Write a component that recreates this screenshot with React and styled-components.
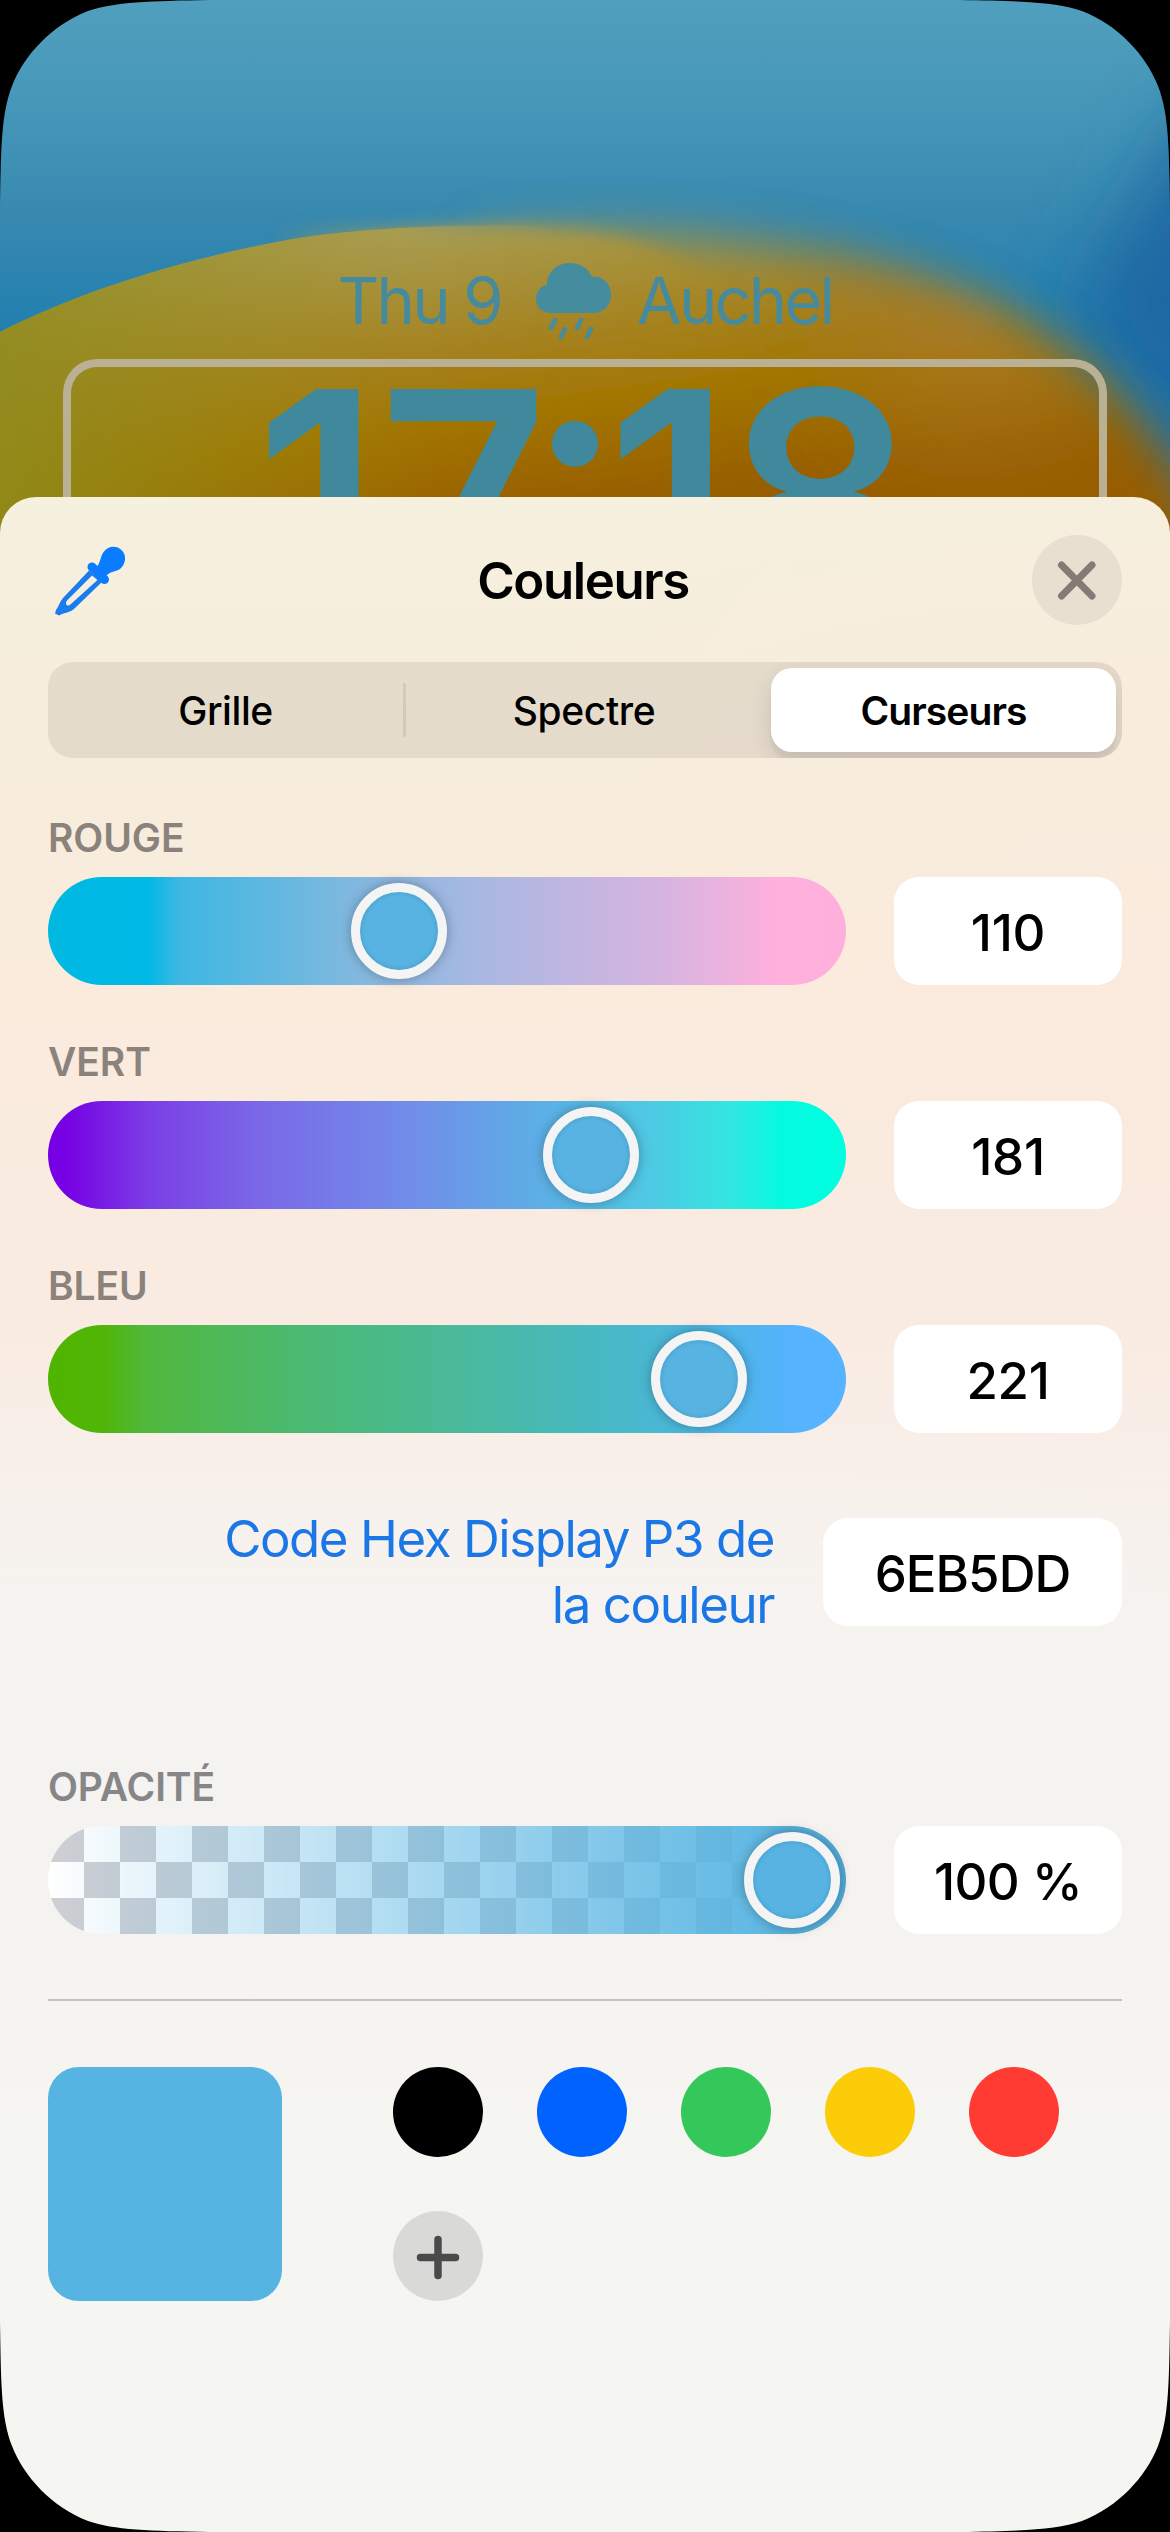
import React from 'react';
import styled, { createGlobalStyle } from 'styled-components';

const GlobalStyle = createGlobalStyle`
  *, *::before, *::after {
    box-sizing: border-box;
  }

  body {
    margin: 0;
    background: #000;
    font-family: Inter, Roboto, 'Liberation Sans', sans-serif;
  }
`

const Screen = styled.div`
  position: relative;
  display: flex;
  flex-direction: column;
  width: 1170px;
  height: 2532px;
  overflow: hidden;
  background: #000;
  clip-path: path('M0 210 C1 150 1 114 12 86 C24 55 52 25 88 11 C114 2 150 1 210 0 L960 0 C1020 1 1056 2 1082 11 C1118 25 1146 55 1158 86 C1169 114 1169 150 1170 210 L1170 2322 C1169 2382 1169 2418 1158 2446 C1146 2477 1118 2507 1082 2521 C1056 2530 1020 2531 960 2532 L210 2532 C150 2531 114 2530 88 2521 C52 2507 24 2477 12 2446 C1 2418 1 2382 0 2322 Z');
`

const Wallpaper = styled.svg`
  position: absolute;
  top: 0;
  left: 0;
`

const LockScreen = styled.div`
  position: relative;
  display: flex;
  flex-direction: column;
  align-items: center;
  height: 497px;
  padding-top: 259px;
  color: #468b9d;
`

const DateLine = styled.div`
  display: flex;
  align-items: center;
  height: 84px;
  font-size: 65px;
  line-height: 84px;
  letter-spacing: -2.8px;

  svg {
    margin: 0 25px 0 35px;
  }
`

const ClockFrame = styled.div`
  display: flex;
  justify-content: center;
  width: 1044px;
  height: 138px;
  margin-top: 16px;
  overflow: hidden;
  border: 8px solid #bab093;
  border-bottom: 0;
  border-radius: 34px 34px 0 0;
`

const Clock = styled.div`
  display: flex;
  height: 290px;
  margin-top: -16px;
  font-size: 294px;
  font-weight: 600;
  line-height: 290px;
  color: #40889b;
`

const Digit = styled.span`
  margin-left: ${(props) => props.$shift || 0}px;
  line-height: ${(props) => 290 - (props.$raise || 0) * 2}px;
`

const Sheet = styled.div`
  position: relative;
  display: flex;
  flex: 1;
  flex-direction: column;
  padding: 38px 48px 0;
  border-radius: 36px 36px 0 0;
  background:
    radial-gradient(ellipse 700px 700px at 100% 22%, rgba(252, 232, 222, 0.3), rgba(252, 232, 222, 0)),
    linear-gradient(#f6f0de 0, #f7eddc 260px, #faebdd 500px, #f9ebe1 820px, #f7f1ec 1000px, #f5f3f1 1150px, #f5f3f0 1400px, #f5f5f1 1700px, #f5f5f1 100%);
`

const Header = styled.div`
  display: flex;
  align-items: center;
  justify-content: space-between;
  height: 90px;
`

const Title = styled.h1`
  margin: 0;
  padding-right: 4px;
  font-size: 51px;
  font-weight: 600;
  letter-spacing: -1.4px;
  color: #000;
`

const CloseButton = styled.button`
  display: flex;
  align-items: center;
  justify-content: center;
  width: 90px;
  height: 90px;
  padding: 0;
  border: 0;
  border-radius: 50%;
  background: #e8dfd0;
`

const Tabs = styled.div`
  display: grid;
  grid-template-columns: 355px 3px 1fr 345px;
  align-items: center;
  height: 96px;
  margin-top: 37px;
  padding-right: 6px;
  overflow: hidden;
  border-radius: 25px;
  background: rgba(120, 110, 100, 0.14);
`

const Tab = styled.div`
  display: flex;
  align-items: center;
  justify-content: center;
  height: 84px;
  padding-right: ${(props) => props.$inset || 0}px;
  border-radius: 21px;
  font-size: 39px;
  font-weight: ${(props) => (props.$active ? 600 : 500)};
  letter-spacing: ${(props) => (props.$active ? -0.9 : -0.4)}px;
  color: #000;
  background: ${(props) => (props.$active ? '#fff' : 'transparent')};
  box-shadow: ${(props) => (props.$active ? '0 9px 24px rgba(0, 0, 0, 0.12), 0 9px 3px rgba(0, 0, 0, 0.04)' : 'none')};
`

const TabDivider = styled.div`
  height: 54px;
  border-radius: 2px;
  background: #d3cabc;
`

const Label = styled.div`
  height: 50px;
  margin-top: ${(props) => props.$top}px;
  font-size: 39px;
  font-weight: 600;
  line-height: 50px;
  letter-spacing: -0.1px;
  color: ${(props) => props.$color || '#8b827c'};
`

const Row = styled.div`
  display: flex;
  justify-content: space-between;
  height: 108px;
  margin-top: 14px;
`

const Track = styled.div`
  width: 798px;
  height: 108px;
  padding: 6px 0;
  border-radius: 54px;
  background: ${(props) => props.$fill};
`

const Thumb = styled.div`
  width: 96px;
  height: 96px;
  border: 9px solid #f4f4f4;
  border-radius: 50%;
  background: #56b3e2;
  box-shadow: 0 0 12px rgba(0, 0, 0, 0.3), inset 0 0 5px rgba(0, 0, 0, 0.15);
`

const Value = styled.div`
  display: flex;
  align-items: center;
  justify-content: center;
  width: ${(props) => props.$width || 228}px;
  height: 108px;
  padding-top: 3px;
  border-radius: 25px;
  background: #fff;
  font-size: 51px;
  font-weight: 500;
  letter-spacing: ${(props) => props.$spacing || -0.3}px;
  color: #000;
`

const HexRow = styled.div`
  display: flex;
  justify-content: flex-end;
  height: 132px;
  margin-top: 85px;
`

const HexLink = styled.div`
  width: 600px;
  margin: -12px 49px 0 0;
  font-size: 51px;
  line-height: 66px;
  letter-spacing: -1.45px;
  text-align: right;
  color: #1b77e6;
`

const Separator = styled.div`
  height: 2px;
  margin-top: 65px;
  background: #c3c2c0;
`

const Palette = styled.div`
  display: flex;
  gap: 111px;
  margin-top: 66px;
`

const CurrentColor = styled.div`
  width: 234px;
  height: 234px;
  border-radius: 31px;
  background: #56b4e2;
`

const Swatches = styled.div`
  display: grid;
  grid-template-columns: repeat(5, 90px);
  grid-auto-rows: 90px;
  gap: 54px;
`

const Swatch = styled.div`
  display: flex;
  align-items: center;
  justify-content: center;
  border-radius: 50%;
  background: ${(props) => props.$color};
`

const channels = [
  { name: 'ROUGE', value: 110, left: 303, fill: 'linear-gradient(90deg, #00b9e2 0, #00b9e6 100px, #3db7e2 130px, #7fb8df 300px, #abb8e2 440px, #d5b4e0 610px, #ffb0dc 730px, #ffafdb 100%)' },
  { name: 'VERT', value: 181, left: 495, fill: 'linear-gradient(90deg, #7600e4 0, #7602e4 20px, #7b3ee5 100px, #7a68e7 210px, #718de9 360px, #5daee6 490px, #4fc8e4 600px, #34e5e1 680px, #04fbdf 735px, #00ffe0 100%)' },
  { name: 'BLEU', value: 221, left: 603, fill: 'linear-gradient(90deg, #50b500 0, #50b506 54px, #51b83e 100px, #4bb96e 240px, #4aba9b 410px, #47b9c3 550px, #4eb5e8 680px, #55b3ff 750px, #55b3ff 100%)' },
]

const opacityFill = 'linear-gradient(90deg, rgba(86, 180, 226, 0) 0, rgba(86, 180, 226, 0.12) 80px, rgba(86, 180, 226, 0.92) 700px, #4fa9d6 100%), repeating-conic-gradient(#fff 0 25%, #cfcfd3 0 50%) 0 0 / 72px 72px'

const swatches = ['#000', '#0062ff', '#34c85a', '#fccc09', '#ff3b33']

const Eyedropper = () => (
  <svg width="90" height="90" viewBox="48 535 90 90" fill="#0b7bff">
    <path d="M96 568 C101 562 100 557 103.500 552 C108 545.500 117 545 121.500 550 C127 555 126 564 120 569 C115 572 110 571 105 577 Z" />
    <path d="M92 567 L104.500 579.500" stroke="#0b7bff" strokeWidth="9" strokeLinecap="round" />
    <path fillRule="evenodd" fill="#1b7cee" d="M89 570.500 L63 598 C59.500 602 59 606 56 610 L55 613.500 L59 615.500 L62 614 C69 612 72 611 75 608 L102 582 Z M92 575.500 L67 600.500 C65 603 66 606 69 605.500 L71.500 603.500 L97.500 580 Z" />
  </svg>
)

const RainCloud = () => (
  <svg width="76" height="78" viewBox="535 261 76 78" fill="#458c9f">
    <path d="M551 312 C541 312 535 306 535 298 C535 291 539 285 546 284 C546 271 556 262 569 262 C579 262 587 267 591 276 C602 274 610 283 610 294 C610 305 602 312 592 312 Z" />
    <path d="M554 319 L550 327 M564 328 L560 336 M580 319 L576 327 M590 328 L586 336" stroke="#458c9f" strokeWidth="4.6" strokeLinecap="round" />
  </svg>
)

const App = () => (
  <>
    <GlobalStyle />
    <Screen>
      <Wallpaper width="1170" height="560" viewBox="0 0 1170 560">
        <defs>
          <linearGradient id="sky" x1="0" y1="0" x2="0" y2="1">
            <stop offset="0" stopColor="#519fbe" />
            <stop offset="0.2" stopColor="#4596b8" />
            <stop offset="0.4" stopColor="#3688b0" />
            <stop offset="0.6" stopColor="#207fb0" />
          </linearGradient>
          <linearGradient id="sun" gradientUnits="userSpaceOnUse" x1="560" y1="215" x2="600" y2="510">
            <stop offset="0" stopColor="#a89c50" />
            <stop offset="0.4" stopColor="#a5821f" />
            <stop offset="0.65" stopColor="#a27500" />
            <stop offset="1" stopColor="#975d00" />
          </linearGradient>
          <linearGradient id="olive" gradientUnits="userSpaceOnUse" x1="0" y1="420" x2="420" y2="340">
            <stop offset="0" stopColor="#8e8c1c" stopOpacity="0.85" />
            <stop offset="1" stopColor="#98860f" stopOpacity="0" />
          </linearGradient>
          <radialGradient id="dusk" gradientUnits="userSpaceOnUse" cx="980" cy="300" r="220">
            <stop offset="0" stopColor="#ae803c" stopOpacity="0.75" />
            <stop offset="1" stopColor="#a5701a" stopOpacity="0" />
          </radialGradient>
          <linearGradient id="fadeLeft" gradientUnits="userSpaceOnUse" x1="400" y1="0" x2="560" y2="0">
            <stop offset="0" stopColor="#fff" />
            <stop offset="1" stopColor="#fff" stopOpacity="0" />
          </linearGradient>
          <linearGradient id="fadeRight" gradientUnits="userSpaceOnUse" x1="270" y1="0" x2="400" y2="0">
            <stop offset="0" stopColor="#fff" stopOpacity="0" />
            <stop offset="1" stopColor="#fff" />
          </linearGradient>
          <mask id="leftSide" maskUnits="userSpaceOnUse" x="0" y="0" width="1170" height="560">
            <rect width="1170" height="560" fill="url(#fadeLeft)" />
          </mask>
          <mask id="rightSide" maskUnits="userSpaceOnUse" x="0" y="0" width="1170" height="560">
            <rect width="1170" height="560" fill="url(#fadeRight)" />
          </mask>
          <filter id="soft" x="-20%" y="-20%" width="140%" height="140%">
            <feGaussianBlur stdDeviation="9" />
          </filter>
          <filter id="softer" x="-20%" y="-20%" width="140%" height="140%">
            <feGaussianBlur stdDeviation="24" />
          </filter>
          <filter id="wide" x="-100%" y="-60%" width="300%" height="220%">
            <feGaussianBlur stdDeviation="38" />
          </filter>
        </defs>
        <rect width="1170" height="560" fill="url(#sky)" />
        <path d="M1290 60 L1180 130 C1140 220 1090 260 1080 320 L1290 560 Z" fill="#1c68a3" filter="url(#wide)" />
        <g mask="url(#rightSide)">
          <path d="M480 240 L540 236 C680 228 800 242 920 280 C1040 320 1120 380 1200 500 L1200 700 L480 700 Z" fill="url(#sun)" filter="url(#softer)" />
          <path d="M100 234 L400 230 C460 226 540 226 600 234 C690 250 740 300 800 400 L800 700 L100 700 Z" fill="url(#sun)" filter="url(#soft)" />
          <path d="M700 236 C780 240 840 255 920 285 C1040 325 1120 385 1200 505 L1200 700 L700 700 Z" fill="url(#dusk)" filter="url(#softer)" />
        </g>
        <path d="M0 332 C65 299 150 268 261 245 C340 228 440 224 560 226 L560 560 L0 560 Z" fill="url(#sun)" mask="url(#leftSide)" />
        <path d="M0 332 C65 299 150 268 261 245 C340 228 440 224 560 226 L560 560 L0 560 Z" fill="url(#olive)" />
      </Wallpaper>
      <LockScreen>
        <DateLine>
          <span>Thu 9</span>
          <RainCloud />
          <span>Auchel</span>
        </DateLine>
        <ClockFrame>
          <Clock>
            <Digit>1</Digit>
            <Digit $shift={-1}>7</Digit>
            <Digit $shift={-20} $raise={29}>:</Digit>
            <Digit $shift={-15}>1</Digit>
            <Digit $shift={-5}>8</Digit>
          </Clock>
        </ClockFrame>
      </LockScreen>
      <Sheet>
        <Header>
          <Eyedropper />
          <Title>Couleurs</Title>
          <CloseButton>
            <svg width="90" height="90" viewBox="0 0 90 90">
              <path d="M29.500 30 L60 61 M60 30 L29.500 61" stroke="#857b76" strokeWidth="7" strokeLinecap="round" />
            </svg>
          </CloseButton>
        </Header>
        <Tabs>
          <Tab>Grille</Tab>
          <TabDivider />
          <Tab $inset={9}>Spectre</Tab>
          <Tab $active>Curseurs</Tab>
        </Tabs>
        {channels.map((channel, i) => (
          <div key={channel.name}>
            <Label $top={i === 0 ? 55 : 52}>{channel.name}</Label>
            <Row>
              <Track $fill={channel.fill}>
                <Thumb style={{ marginLeft: channel.left }} />
              </Track>
              <Value>{channel.value}</Value>
            </Row>
          </div>
        ))}
        <HexRow>
          <HexLink>Code Hex Display P3 de la couleur</HexLink>
          <Value $width={299} $spacing={-1}>6EB5DD</Value>
        </HexRow>
        <Label $top={112} $color="#868587">OPACITÉ</Label>
        <Row>
          <Track $fill={opacityFill}>
            <Thumb style={{ marginLeft: 696 }} />
          </Track>
          <Value $spacing={-0.7}>100 %</Value>
        </Row>
        <Separator />
        <Palette>
          <CurrentColor />
          <Swatches>
            {swatches.map((color) => (
              <Swatch key={color} $color={color} />
            ))}
            <Swatch $color="#d9d9d8">
              <svg width="90" height="90" viewBox="0 0 90 90">
                <path d="M27.500 46.500 H62.500 M45 28.500 V64.500" stroke="#4a4a4a" strokeWidth="7.500" strokeLinecap="round" />
              </svg>
            </Swatch>
          </Swatches>
        </Palette>
      </Sheet>
    </Screen>
  </>
)

export default App;
